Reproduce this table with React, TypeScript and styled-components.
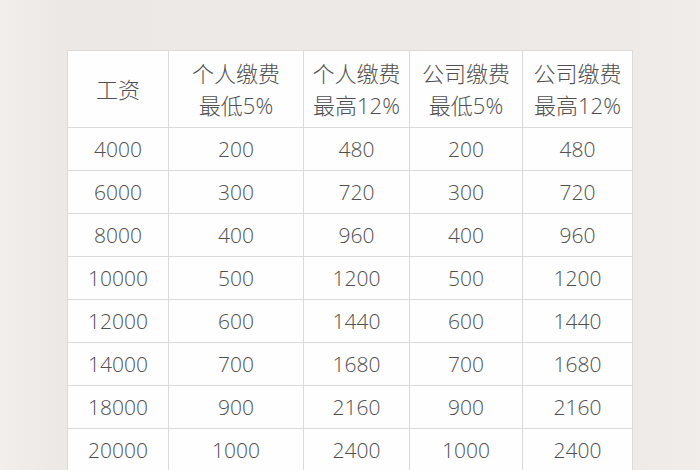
import styled, { createGlobalStyle } from "styled-components";

const GlobalStyle = createGlobalStyle`
    html, body {
        margin : 0;
        padding : 0;
        background : #eeeae7;
    }
`;

const headers = [
    ["工资"],
    ["个人缴费", "最低5%"],
    ["个人缴费", "最高12%"],
    ["公司缴费", "最低5%"],
    ["公司缴费", "最高12%"],
];

const salaries = [4000, 6000, 8000, 10000, 12000, 14000, 18000, 20000];

function App() {
    return (
        <>
            <GlobalStyle />
            <Page>
                <Grid>
                    {headers.map((lines, i) => (
                        <HeadCell key={i}>
                            {lines.map((line) => (
                                <span key={line}>{line}</span>
                            ))}
                        </HeadCell>
                    ))}
                    {salaries.map((salary) => {
                        const low = salary * 0.05;
                        const high = salary * 0.12;
                        return [salary, low, high, low, high].map((value, i) => (
                            <Cell key={`${salary}-${i}`}>{value}</Cell>
                        ));
                    })}
                </Grid>
            </Page>
        </>
    );
}

const Page = styled.div`
    width : 700px;
    height : 470px;
    overflow : hidden;
    padding : 50px 0 0 67px;
    box-sizing : border-box;
    background : linear-gradient(90deg, #f1eeec 0px, #ece8e5 60px, #eeeae7 640px, #f0edea 700px);
`;

const Grid = styled.div`
    display : grid;
    grid-template-columns : 100px 134px 105px 112px 109px;
    grid-template-rows : 76px;
    grid-auto-rows : 42px;
    gap : 1px;
    width : max-content;
    background : #dadada;
    border : 1px solid #dadada;
    font-family : "Open Sans", "Noto Sans CJK SC", sans-serif;
    font-weight : 300;
    color : #505050;
`;

const Cell = styled.div`
    background : #fefefe;
    display : flex;
    align-items : center;
    justify-content : center;
    font-size : 21px;
    line-height : 1;
`;

const HeadCell = styled(Cell)`
    flex-direction : column;
    font-size : 22px;
    line-height : 32px;
`;

export default App;
